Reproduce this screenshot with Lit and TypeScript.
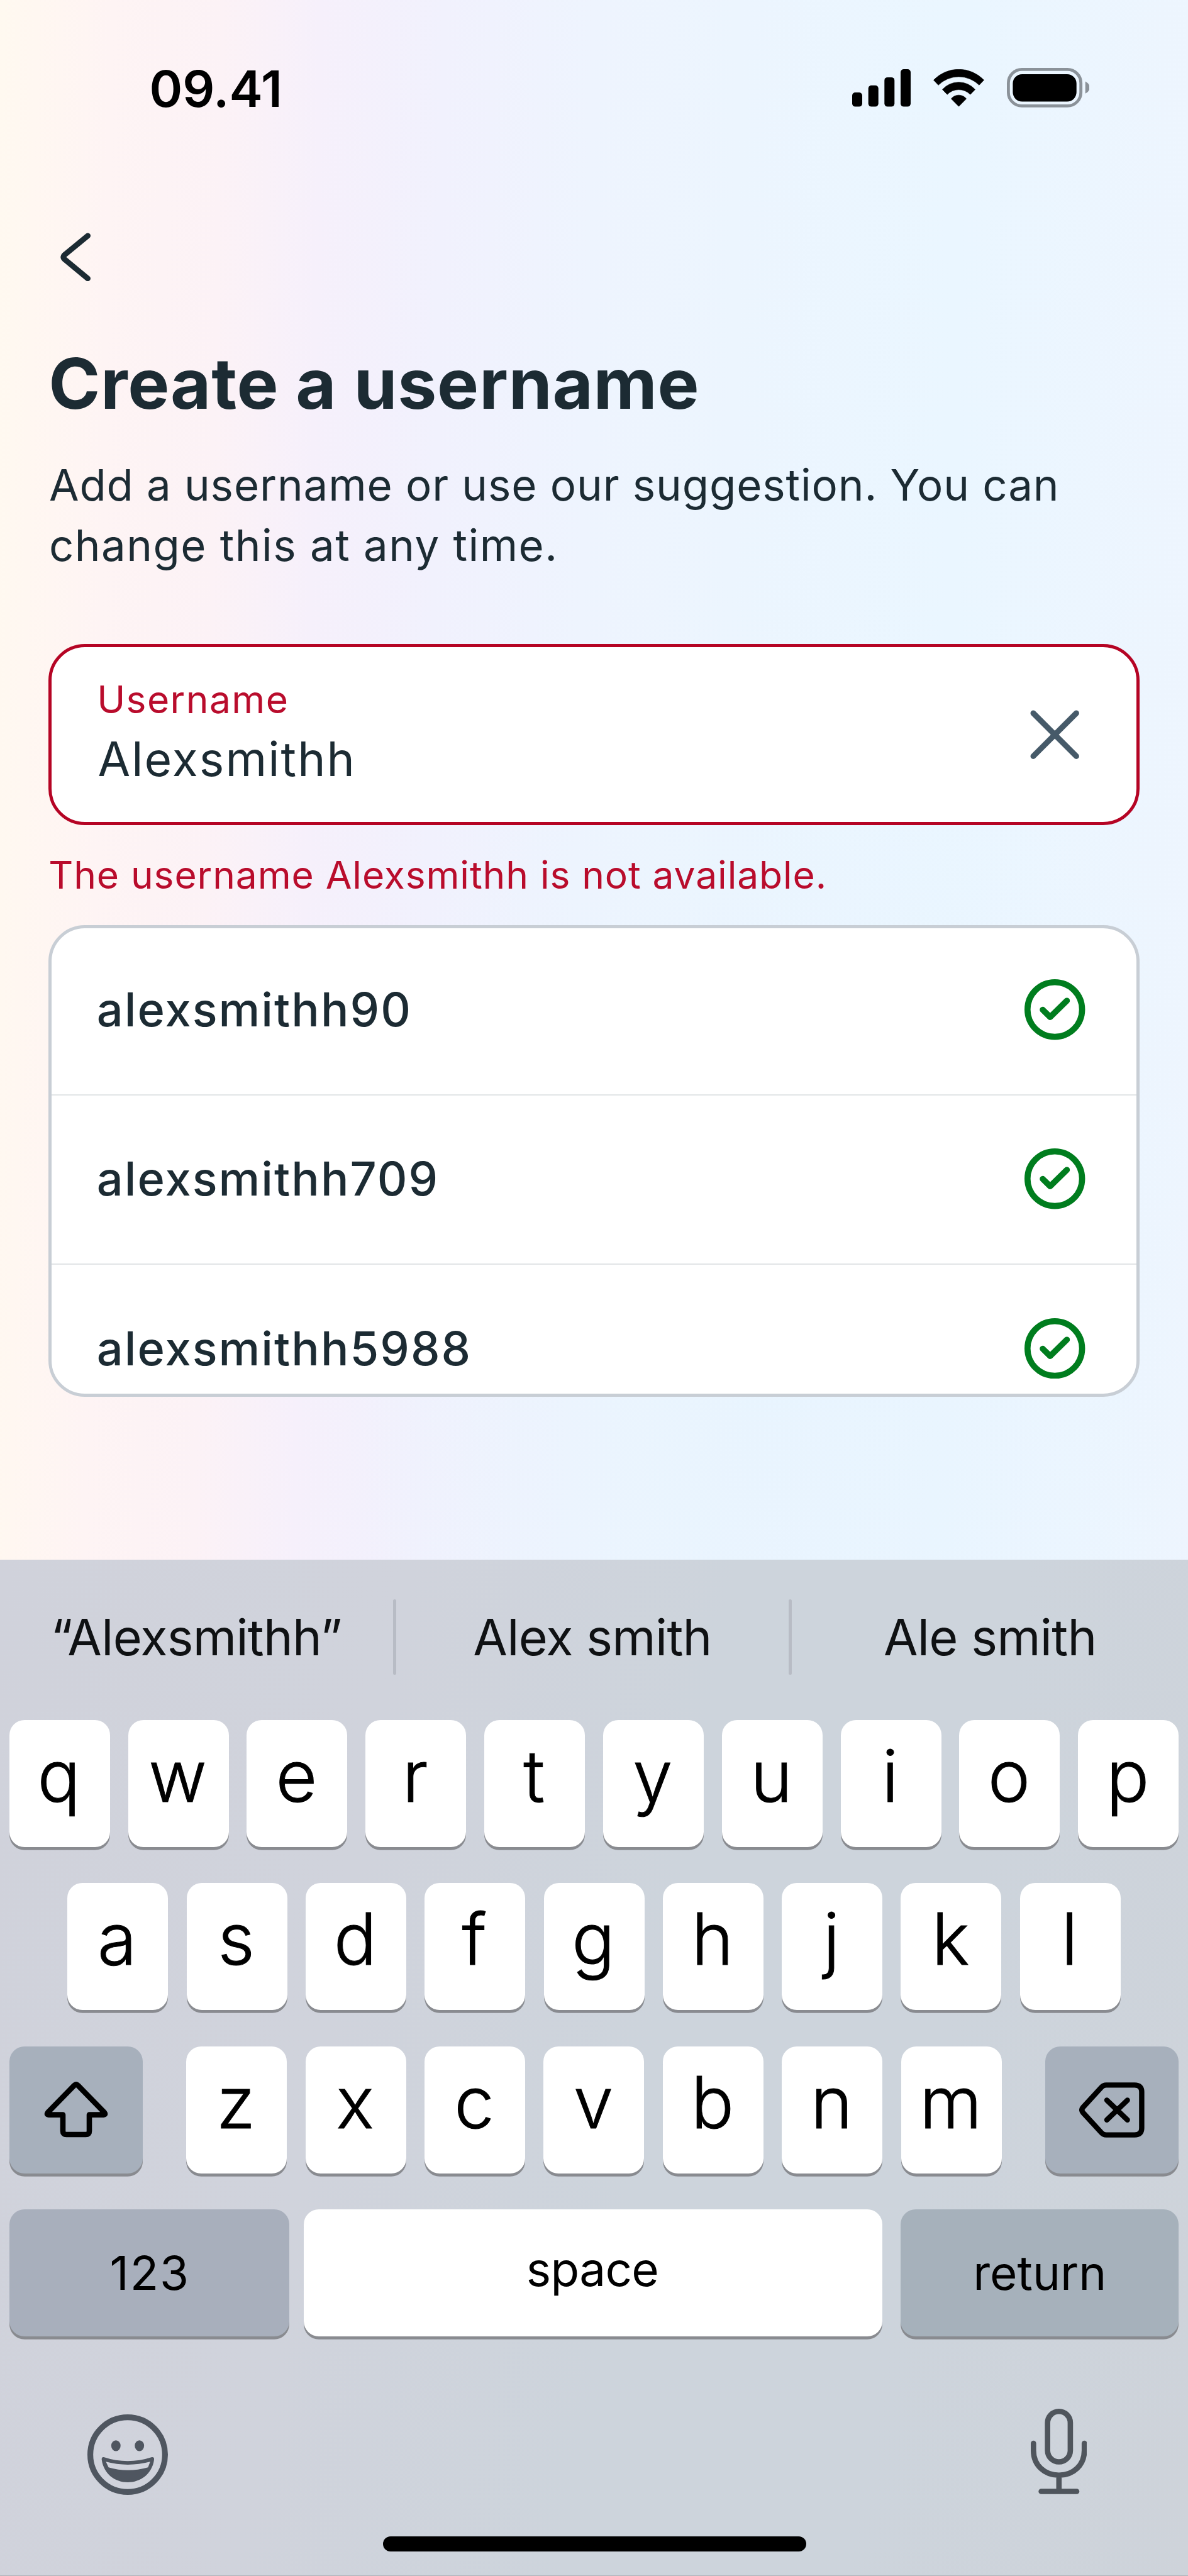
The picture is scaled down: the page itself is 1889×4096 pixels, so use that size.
import { LitElement, html, css } from "lit";
import { customElement, property } from "lit/decorators.js";

const suggestions = ["alexsmithh90", "alexsmithh709", "alexsmithh5988"];
const predictions = ["“Alexsmithh”", "Alex smith", "Ale smith"];
const topRow = [..."qwertyuiop"];
const homeRow = [..."asdfghjkl"];
const bottomRow = [..."zxcvbnm"];

@customElement("status-bar")
export class StatusBar extends LitElement {
  static styles = css`
    :host {
      display: flex;
      justify-content: space-between;
      height: 191px;
      box-sizing: border-box;
      padding: 91px 156.6px 0 237.5px;
      color: #000;
    }
    .time { font-size: 80px; font-weight: 600; line-height: 100px; letter-spacing: -0.1px; }
    .icons { display: flex; align-items: center; gap: 35.7px; height: 63px; margin-top: 17.3px; }
    svg { display: block; }
  `;
  render() {
    return html`
      <div class="time">09.41</div>
      <div class="icons">
        <svg width="93" height="59.6" viewBox="0 0 93 59.6">
          <rect x="0" y="37" width="16" height="22.6" rx="5" />
          <rect x="25.7" y="25.7" width="16" height="33.9" rx="5" />
          <rect x="51.3" y="12.9" width="16" height="46.7" rx="5" />
          <rect x="77" y="0" width="16" height="59.6" rx="5" />
        </svg>
        <svg width="81" height="59.6" viewBox="0 0 101 74.3">
          <path d="M0.6 21.6A69 69 0 0 1 100.4 21.6L91 31.6A57.5 57.5 0 0 0 10 31.6Z" stroke="#000" stroke-width="0.8" stroke-linejoin="round" />
          <path d="M18 40.3A43.6 43.6 0 0 1 83 40.3L73.4 50.2A32.1 32.1 0 0 0 27.6 50.2Z" stroke="#000" stroke-width="0.8" stroke-linejoin="round" />
          <path d="M35.5 58.7A19 19 0 0 1 65.5 58.7L50.5 73.8Z" stroke="#000" stroke-width="0.8" stroke-linejoin="round" />
        </svg>
        <svg width="131.6" height="62.8" viewBox="0 0 131.6 62.8">
          <rect x="2.4" y="2.4" width="115.3" height="58" rx="21.5" fill="none" stroke="#8b9299" stroke-width="4.8" />
          <rect x="9.4" y="9.9" width="101.3" height="43.7" rx="15" />
          <path d="M124.7 21.6C129 23.5 131.6 27 131.6 31.2S129 39 124.7 40.8Z" fill="#8b9299" />
        </svg>
      </div>
    `;
  }
}

@customElement("username-form")
export class UsernameForm extends LitElement {
  static styles = css`
    :host { display: flex; flex-direction: column; padding: 178.7px 76.6px 0 77.2px; color: #1c2b33; }
    svg { display: block; }
    .back { margin-left: 19.2px; width: 48.5px; height: 77.5px; }
    h1 { margin: 98.1px 0 0; font-size: 111px; font-weight: 700; line-height: 130px; letter-spacing: 0.7px; }
    .lead { display: flex; flex-direction: column; margin: 47.4px 0 0 0.8px; font-size: 69px; line-height: 96.1px; white-space: nowrap; }
    .lead .first { letter-spacing: 0.88px; }
    .lead .second { letter-spacing: 1.45px; }
    .field {
      display: flex;
      align-items: center;
      justify-content: space-between;
      box-sizing: border-box;
      height: 288.1px;
      margin-top: 109px;
      padding: 0 81.6px 0 72px;
      border: 5px solid #b50424;
      border-radius: 58px;
      background: #fff;
    }
    .texts { display: flex; flex-direction: column; gap: 9.3px; align-self: flex-start; padding-top: 43.4px; }
    .label { font-size: 60.5px; line-height: 80px; letter-spacing: 1.4px; color: #b90c2c; }
    .value { margin-left: 1.3px; font-size: 75px; line-height: 90px; letter-spacing: 2.1px; }
    .error { margin: 38.9px 0 0; font-size: 60.5px; line-height: 80px; letter-spacing: 0.9px; color: #b90c2c; }
    .list {
      display: flex;
      flex-direction: column;
      box-sizing: border-box;
      height: 749.9px;
      margin-top: 39.9px;
      border: 5px solid #c8ced5;
      border-radius: 58px;
      background: #fff;
      overflow: hidden;
    }
    .row {
      display: flex;
      flex: none;
      align-items: center;
      justify-content: space-between;
      box-sizing: border-box;
      height: 269.3px;
      padding: 0 81.6px 1.4px 71.5px;
      border-bottom: 2.5px solid #e2e5e7;
      font-size: 74px;
      font-weight: 500;
      letter-spacing: 2.05px;
    }
    .row:first-child { height: 265.8px; padding-bottom: 4.3px; }
  `;
  render() {
    return html`
      <svg class="back" viewBox="0 0 48.5 77.5" fill="none" stroke="#1c2b33" stroke-width="8.8" stroke-linecap="round" stroke-linejoin="round">
        <path d="M43.6 4.8L6.2 35.6Q3 38.7 6.2 41.8L43.6 72.8" />
      </svg>
      <h1>Create a username</h1>
      <p class="lead">
        <span class="first">Add a username or use our suggestion. You can</span>
        <span class="second">change this at any time.</span>
      </p>
      <div class="field">
        <div class="texts">
          <div class="label">Username</div>
          <div class="value">Alexsmithh</div>
        </div>
        <svg width="96.4" height="96.4" viewBox="0 0 96.4 96.4" stroke="#465a69" stroke-width="9" stroke-linecap="round">
          <path d="M14 14L82.4 82.4M82.4 14L14 82.4" />
        </svg>
      </div>
      <p class="error">The username Alexsmithh is not available.</p>
      <div class="list">
        ${suggestions.map(
          (name) => html`
            <div class="row">
              <span>${name}</span>
              <svg width="96.4" height="96.4" viewBox="0 0 96.4 96.4" fill="none" stroke="#007d1e" stroke-width="9.6" stroke-linecap="round" stroke-linejoin="round">
                <circle cx="48.2" cy="48.2" r="43.4" />
                <path d="M29 48.6L40.9 60.2L67.4 34.2" />
              </svg>
            </div>
          `
        )}
      </div>
    `;
  }
}

@customElement("key-cap")
export class KeyCap extends LitElement {
  @property({ reflect: true }) kind = "letter";
  static styles = css`
    :host {
      display: flex;
      flex: none;
      align-items: center;
      justify-content: center;
      box-sizing: border-box;
      width: 160px;
      height: 202.2px;
      padding: 0 2px 24px 0;
      border-radius: 24px;
      background: #fff;
      box-shadow: 0 4.8px 0 #898b90;
      color: #000;
      font-size: 113.5px;
      font-weight: 300;
      line-height: 1;
      -webkit-text-stroke: 1px #000;
    }
    :host([kind="icon"]), :host([kind="mode"]), :host([kind="return"]) { padding: 0; background: #a7b0bc; }
    :host([kind="icon"]) { width: 212.4px; }
    :host([kind="mode"]), :host([kind="return"]), :host([kind="space"]) {
      font-size: 74.6px;
      font-weight: 400;
      -webkit-text-stroke: 0;
    }
    :host([kind="mode"]) { width: 445px; padding-left: 2px; letter-spacing: 1.8px; background: #a8afbc; }
    :host([kind="space"]) { width: 920.8px; padding: 0 2px 12.7px 0; margin: 0 6px 0 0; letter-spacing: -0.7px; }
    :host([kind="return"]) { width: 442px; background: #a6b1bb; }
  `;
  render() {
    return html`<slot></slot>`;
  }
}

@customElement("soft-keyboard")
export class SoftKeyboard extends LitElement {
  static styles = css`
    :host {
      display: flex;
      flex-direction: column;
      box-sizing: border-box;
      height: 1616px;
      background: linear-gradient(100deg, #d0d2db 0%, #d0d3dc 30%, #cdd4dc 54%, #cdd4dc 75%, #ced3da 100%);
      border-bottom: 1px solid #aeb2b8;
    }
    svg { display: block; }
    .predictions { display: grid; grid-template-columns: 624.6px 5px 624.8px 5px 1fr; align-items: center; height: 246px; }
    .word { text-align: center; font-size: 79.2px; letter-spacing: -0.75px; color: #0f1113; }
    .sep { height: 119.5px; border-radius: 2.5px; background: #b8bcc5; }
    .keys { display: flex; flex-direction: column; gap: 57.3px; padding: 8.6px 14.7px 0; }
    .line { display: flex; justify-content: space-between; }
    .line.home { padding: 0 92.5px; }
    .letters { display: flex; justify-content: space-between; width: 1296.7px; }
    .tools { display: flex; justify-content: space-between; padding: 114.6px 160.7px 0 139.2px; }
    .emoji { margin-top: 8.7px; }
    .home-bar { width: 673.2px; height: 24px; margin: 66.7px 0 0 608.8px; border-radius: 12px; background: #000; }
  `;
  render() {
    return html`
      <div class="predictions">
        ${predictions.map((word, i) => html`${i ? html`<span class="sep"></span>` : ""}<span class="word">${word}</span>`)}
      </div>
      <div class="keys">
        <div class="line">${topRow.map((k) => html`<key-cap>${k}</key-cap>`)}</div>
        <div class="line home">${homeRow.map((k) => html`<key-cap>${k}</key-cap>`)}</div>
        <div class="line">
          <key-cap kind="icon">
            <svg width="102" height="88.5" viewBox="0 0 102 88.5" fill="none" stroke="#000" stroke-width="8.6" stroke-linejoin="round">
              <path d="M48.2 5.8Q51 3.2 53.8 5.8L96 49Q98.6 52.4 94.5 52.6H72V78.4Q72 84 66.4 84H35.6Q30 84 30 78.4V52.6H7.5Q3.4 52.4 6 49Z" />
            </svg>
          </key-cap>
          <div class="letters">${bottomRow.map((k) => html`<key-cap>${k}</key-cap>`)}</div>
          <key-cap kind="icon">
            <svg width="104" height="88" viewBox="0 0 104 88" fill="none" stroke="#000" stroke-width="8.4" stroke-linecap="round" stroke-linejoin="round">
              <path d="M43 4.4H88Q99.4 4.4 99.4 15V73Q99.4 83.6 88 83.6H43Q38.5 83.6 35.2 80L6.2 48.4Q2.4 44 6.2 39.6L35.2 8Q38.5 4.4 43 4.4Z" />
              <path d="M44 28.4L76.6 59.8M76.6 28.4L44 59.8" />
            </svg>
          </key-cap>
        </div>
        <div class="line">
          <key-cap kind="mode">123</key-cap>
          <key-cap kind="space">space</key-cap>
          <key-cap kind="return">return</key-cap>
        </div>
      </div>
      <div class="tools">
        <svg class="emoji" width="128" height="128" viewBox="0 0 128 128" fill="#4f5660">
          <circle cx="64" cy="64" r="59.4" fill="none" stroke="#4f5660" stroke-width="9.2" />
          <ellipse cx="45.3" cy="49.9" rx="7.4" ry="8.6" />
          <ellipse cx="82.7" cy="49.9" rx="7.4" ry="8.6" />
          <path fill-rule="evenodd" d="M26 68Q64 80.5 102.5 68Q106.5 67.5 106 72C103 95 84 108 64.2 108C44 108 26 95 22.7 72Q22.3 67.5 26 68ZM29.4 75.3Q64 84.5 99.8 75.3L96.4 84.2Q64 93.5 33.6 84.2Z" />
        </svg>
        <svg width="89.5" height="136" viewBox="0 0 89.5 136" fill="none" stroke="#4f555c" stroke-width="8.6" stroke-linecap="round">
          <rect x="26.7" y="4.3" width="36.2" height="80.2" rx="18.1" />
          <path d="M4.3 55V66.5C4.3 90 22 105.8 44.8 105.8S85.2 90 85.2 66.5V55M44.8 106V131.5M16.6 131.5H73" />
        </svg>
      </div>
      <div class="home-bar"></div>
    `;
  }
}

@customElement("app-root")
export class AppRoot extends LitElement {
  static styles = css`
    :host {
      display: flex;
      flex-direction: column;
      width: 1889px;
      height: 4096px;
      overflow: hidden;
      font-family: Inter, "Liberation Sans", sans-serif;
      background:
        radial-gradient(ellipse 700px 1300px at 1250px 2200px, rgba(232, 244, 254, 0.8), rgba(232, 244, 254, 0)),
        linear-gradient(91deg, #fff9f0 0%, #fff7f1 3%, #fef4f4 9%, #fcf2f6 18%, #f6f0fb 26%, #f1f1fd 36%, #eef4fe 48%, #ecf5fe 60%, #eaf6ff 78%, #eef5fe 100%);
    }
    .keyboard { margin-top: auto; flex: none; }
  `;
  render() {
    return html`
      <status-bar></status-bar>
      <username-form></username-form>
      <soft-keyboard class="keyboard"></soft-keyboard>
    `;
  }
}
